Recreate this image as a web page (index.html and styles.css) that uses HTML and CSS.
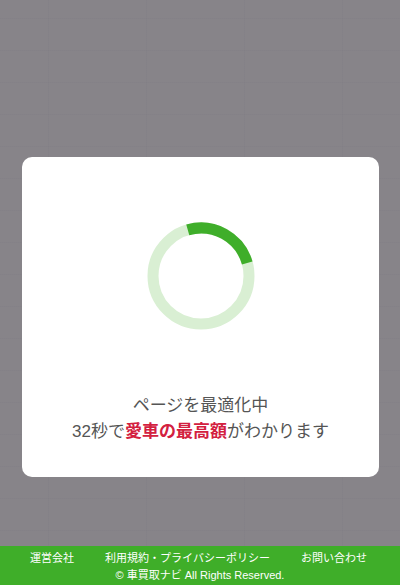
FILE: index.html
```html
<!DOCTYPE html>
<html lang="ja">
<head>
<meta charset="utf-8">
<link rel="stylesheet" href="styles.css">
</head>
<body>
<div class="page">
  <main class="overlay">
    <div class="modal">
      <svg class="ring" width="110" height="110" viewBox="0 0 110 110">
        <circle cx="55" cy="55" r="48" fill="none" stroke="#d9efd3" stroke-width="11"/>
        <circle cx="55" cy="55" r="48" fill="none" stroke="#3fae2a" stroke-width="11"
          stroke-dasharray="75.4 226.2" transform="rotate(-106 55 55)"/>
      </svg>
      <p class="msg">ページを最適化中<br>32秒で<strong>愛車の最高額</strong>がわかります</p>
    </div>
  </main>
  <footer class="footer">
    <nav class="links">
      <span>運営会社</span>
      <span>利用規約・プライバシーポリシー</span>
      <span>お問い合わせ</span>
    </nav>
    <div class="copy">© 車買取ナビ All Rights Reserved.</div>
  </footer>
</div>
</body>
</html>
```
FILE: styles.css
```css
html, body {
  margin: 0;
  padding: 0;
}
body {
  font-family: "Liberation Sans", "Noto Sans CJK JP", sans-serif;
  background: #868388;
}
.page {
  height: 585px;
  display: flex;
  flex-direction: column;
}
.overlay {
  flex: 1;
  padding: 157px 21px 0 22px;
  background-color: #878489;
  background-image:
    linear-gradient(rgba(125,122,130,0.25) 1px, transparent 1px),
    linear-gradient(90deg, rgba(125,122,130,0.25) 1px, transparent 1px);
  background-size: 98px 32px;
  background-position: 48px 18px;
}
.modal {
  height: 320px;
  background: #fff;
  border-radius: 10px;
  display: flex;
  flex-direction: column;
  align-items: center;
  box-sizing: border-box;
  padding-top: 64px;
}
.ring {
  display: block;
}
.msg {
  margin: 62px 0 0;
  text-align: center;
  font-size: 17px;
  line-height: 26px;
  color: #555;
}
.msg strong {
  color: #d3203f;
  font-weight: 700;
}
.footer {
  height: 39px;
  background: #3fae29;
  color: #fff;
  font-size: 11px;
  line-height: 17px;
  display: flex;
  flex-direction: column;
  align-items: center;
  padding-top: 4px;
  box-sizing: border-box;
}
.links {
  width: 100%;
  display: flex;
  justify-content: space-between;
  padding: 0 33px 0 30px;
  box-sizing: border-box;
}
.copy {
  text-align: center;
}
```
